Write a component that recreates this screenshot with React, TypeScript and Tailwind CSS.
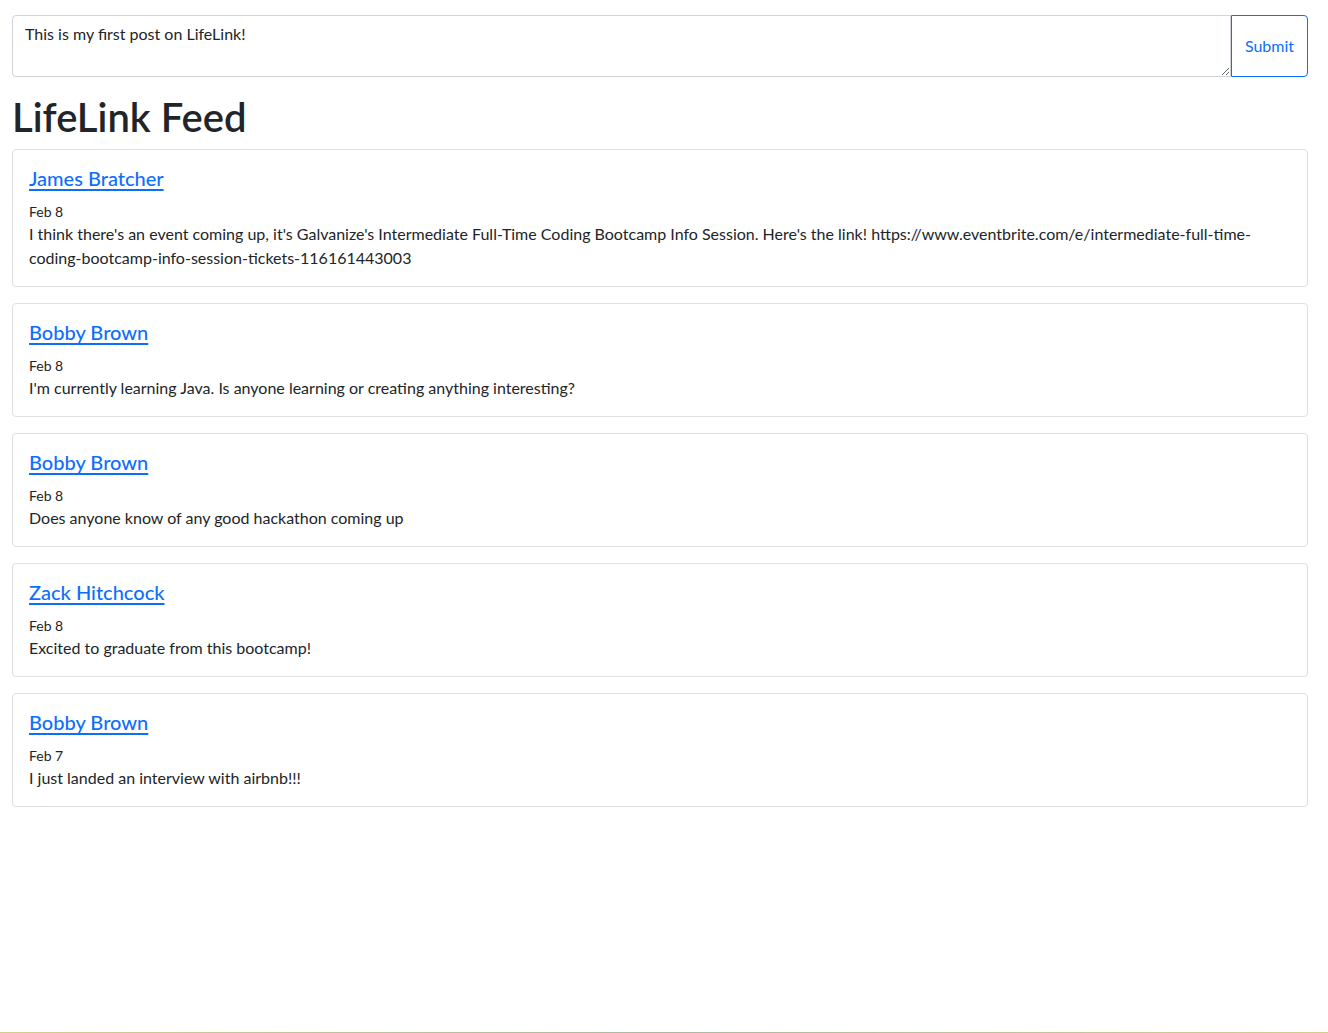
const posts = [
  {
    author: 'James Bratcher',
    date: 'Feb 8',
    text: "I think there's an event coming up, it's Galvanize's Intermediate Full-Time Coding Bootcamp Info Session. Here's the link! https://www.eventbrite.com/e/intermediate-full-time-coding-bootcamp-info-session-tickets-116161443003",
  },
  {
    author: 'Bobby Brown',
    date: 'Feb 8',
    text: "I'm currently learning Java. Is anyone learning or creating anything interesting?",
  },
  {
    author: 'Bobby Brown',
    date: 'Feb 8',
    text: 'Does anyone know of any good hackathon coming up',
  },
  {
    author: 'Zack Hitchcock',
    date: 'Feb 8',
    text: 'Excited to graduate from this bootcamp!',
  },
  {
    author: 'Bobby Brown',
    date: 'Feb 7',
    text: 'I just landed an interview with airbnb!!!',
  },
];

const PostCard = ({ author, date, text }: { author: string; date: string; text: string }) => (
  <div className="mb-4 border border-[#dfdfdf] rounded-[4px] bg-white">
    <div className="p-4">
      <h5 className="text-[20px] leading-[24px] font-medium mb-[11px]">
        <a href="#" className="text-[#0d6efd] underline underline-offset-[3px]">
          {author}
        </a>
      </h5>
      <div className="text-[14px] leading-[21px]">{date}</div>
      <p className="text-[16px] leading-[24px] break-words">{text}</p>
    </div>
  </div>
);

export default function App() {
  return (
    <div
      className="min-h-[1033px] flex flex-col bg-white text-[#212529]"
      style={{ fontFamily: 'Lato, "Noto Sans", sans-serif' }}
    >
      <div className="pl-3 pr-5">
        <form className="flex mt-[15px]" onSubmit={(e) => e.preventDefault()}>
          <textarea
            rows={2}
            defaultValue="This is my first post on LifeLink!"
            className="flex-1 h-[62px] px-3 py-[6px] text-[16px] leading-[24px] border border-[#ced4da] rounded-l-[4px] text-[#212529] outline-none"
          />
          <button
            type="submit"
            className="w-[77px] h-[62px] border border-[#0d6efd] rounded-r-[4px] text-[#0d6efd] text-[16px] leading-[24px] bg-white"
          >
            Submit
          </button>
        </form>
        <h1 className="text-[40px] leading-[48px] font-semibold mt-4 mb-2">LifeLink Feed</h1>
        {posts.map((post, index) => (
          <PostCard key={index} {...post} />
        ))}
      </div>
      <div className="mt-auto h-px bg-gradient-to-r from-[#d2cf8c] via-[#a9b9a2] to-[#d2cf8c]" />
    </div>
  );
}
